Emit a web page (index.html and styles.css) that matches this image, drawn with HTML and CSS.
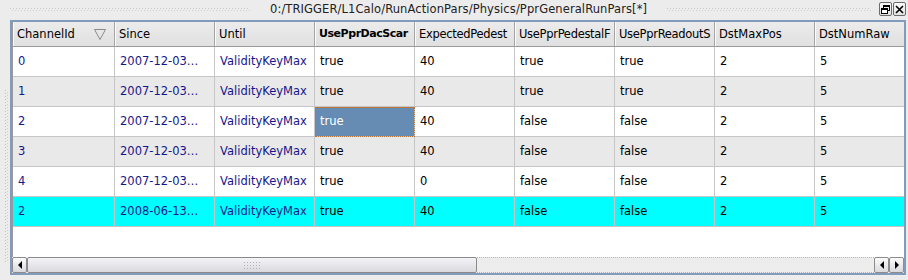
FILE: index.html
```html
<!DOCTYPE html>
<html lang="en">

<head>
    <meta charset="UTF-8">
    <title>PprGeneralRunPars</title>
    <link rel="stylesheet" href="styles.css">
</head>

<body>
    <div class="titlebar">
        <div class="grip grip-left"></div>
        <span class="title">0:/TRIGGER/L1Calo/RunActionPars/Physics/PprGeneralRunPars[*]</span>
        <div class="grip"></div>
        <div class="win-buttons">
            <span class="win-btn">
                <svg width="11" height="11" viewBox="0 0 11 11">
                    <rect x="3.5" y="1.5" width="6" height="5" fill="none" stroke="#000" stroke-width="1"/>
                    <rect x="3.5" y="1.5" width="6" height="1.5" fill="#000"/>
                    <rect x="1.5" y="4.5" width="6" height="5" fill="#fff" stroke="#000" stroke-width="1"/>
                    <rect x="1.5" y="4.5" width="6" height="1.5" fill="#000"/>
                </svg>
            </span>
            <span class="win-btn">
                <svg width="11" height="11" viewBox="0 0 11 11">
                    <path d="M2 2 L9 9 M9 2 L2 9" stroke="#000" stroke-width="1.6"/>
                </svg>
            </span>
        </div>
    </div>

    <div class="workspace">
        <div class="gutter">
            <div class="gutter-grip"></div>
        </div>
        <div class="frame">
            <div class="viewport">
                <div class="row head">
                    <div class="cell sorted">
                        <span>ChannelId</span>
                        <svg width="12" height="11" viewBox="0 0 12 11">
                            <polygon points="0.5,0.5 11.5,0.5 6,10.5" fill="none" stroke="#8a8a8a"/>
                        </svg>
                    </div>
                    <div class="cell">Since</div>
                    <div class="cell">Until</div>
                    <div class="cell bold">UsePprDacScar</div>
                    <div class="cell narrow">ExpectedPedest</div>
                    <div class="cell narrow">UsePprPedestalF</div>
                    <div class="cell narrow">UsePprReadoutS</div>
                    <div class="cell">DstMaxPos</div>
                    <div class="cell">DstNumRaw</div>
                </div>
                <div id="rows"></div>
                <div class="empty"></div>
            </div>
            <div class="hscroll">
                <span class="sb-btn"><i class="arrow-left"></i></span>
                <div class="thumb"><span class="thumb-grip"></span></div>
                <div class="track"></div>
                <span class="sb-btn"><i class="arrow-left"></i></span>
                <span class="sb-btn"><i class="arrow-right"></i></span>
            </div>
        </div>
    </div>

    <script>
        const data = [
            ['0', '2007-12-03…', 'ValidityKeyMax', 'true', '40', 'true', 'true', '2', '5'],
            ['1', '2007-12-03…', 'ValidityKeyMax', 'true', '40', 'true', 'true', '2', '5'],
            ['2', '2007-12-03…', 'ValidityKeyMax', 'true', '40', 'false', 'false', '2', '5'],
            ['3', '2007-12-03…', 'ValidityKeyMax', 'true', '40', 'false', 'false', '2', '5'],
            ['4', '2007-12-03…', 'ValidityKeyMax', 'true', '0', 'false', 'false', '2', '5'],
            ['2', '2008-06-13…', 'ValidityKeyMax', 'true', '40', 'false', 'false', '2', '5']
        ];

        const rows = document.getElementById('rows');

        data.forEach((values, r) => {
            const row = document.createElement('div');
            row.className = 'row';
            if (r % 2 === 1) row.classList.add('alt');
            if (r === data.length - 1) row.classList.add('hit');

            values.forEach((v, c) => {
                const cell = document.createElement('div');
                cell.className = 'cell';
                if (c < 3) cell.classList.add('key');
                if (r === 2 && c === 3) cell.classList.add('sel');
                cell.textContent = v;
                row.appendChild(cell);
            });

            rows.appendChild(row);
        });
    </script>
</body>
</html>
```

FILE: styles.css
```css
/* Global styles */
* {
    box-sizing: border-box;
    margin: 0;
    padding: 0;
}

body {
    width: 908px;
    height: 280px;
    overflow: hidden;
    background-color: #ececec;
    color: #000;
    font-family: "DejaVu Sans", sans-serif;
    font-size: 11.5px;
}

/* Title bar */
.titlebar {
    height: 20px;
    display: flex;
    align-items: center;
    padding: 0 2px 2px 10px;
}

.grip {
    flex: 1;
    height: 3px;
    background-image:
        linear-gradient(90deg, #c8c8c8 1px, transparent 1px),
        linear-gradient(90deg, transparent 2px, #d2d2d2 2px, #d2d2d2 3px, transparent 3px);
    background-size: 3px 1px, 3px 1px;
    background-position: 0 0, 0 2px;
    background-repeat: repeat-x;
}

.grip-left {
    flex: none;
    width: 240px;
}

.title {
    margin: 0 20px;
    color: #222;
    white-space: nowrap;
    letter-spacing: 0.1px;
}

.win-buttons {
    display: flex;
    gap: 1px;
    margin-left: 8px;
}

.win-btn {
    width: 13px;
    height: 14px;
    display: flex;
    align-items: center;
    justify-content: center;
    border: 1px solid #6c6c6c;
    border-radius: 2px;
    background: linear-gradient(#fbfbfb, #e2e2e2);
}

/* Main area */
.workspace {
    display: flex;
    height: 255px;
}

.gutter {
    width: 10px;
}

.gutter-grip {
    width: 3px;
    height: 172px;
    margin: 70px 0 0 5px;
    background-image:
        linear-gradient(#c2c2c2 1px, transparent 1px),
        linear-gradient(transparent 2px, #cfcfcf 2px, #cfcfcf 3px, transparent 3px);
    background-size: 1px 3px, 1px 3px;
    background-position: 0 0, 2px 0;
    background-repeat: repeat-y;
}

.frame {
    width: 896px;
    height: 255px;
    border: 2px solid #819cba;
    display: flex;
    flex-direction: column;
}

.viewport {
    flex: 1;
    background-color: #fff;
    border-left: 1px solid #9a9a9a;
    overflow: hidden;
}

/* Table rows */
.row {
    display: grid;
    grid-template-columns: 102px repeat(7, 100px) 1fr;
    height: 30px;
}

.cell {
    padding-left: 5px;
    line-height: 29px;
    white-space: nowrap;
    overflow: hidden;
    border-right: 1px solid #c6c6c6;
    border-bottom: 1px solid #c6c6c6;
}

.cell:last-child {
    border-right: none;
}

.head {
    height: 25px;
}

.head .cell {
    padding-left: 4px;
    line-height: 24px;
    background: linear-gradient(#ececec, #e0e0e0);
    border-right: 1px solid #a4a4a4;
    border-bottom: 1px solid #9a9a9a;
    box-shadow: inset 1px 0 #fbfbfb;
}

.head .cell:last-child {
    border-right: none;
}

.head .sorted {
    display: flex;
    justify-content: space-between;
    align-items: center;
    padding-right: 8px;
}

.head .bold {
    font-weight: bold;
    font-size: 11px;
    letter-spacing: -0.45px;
}

.head .narrow {
    letter-spacing: -0.3px;
}

.alt {
    background-color: #e9e9e9;
}

.hit {
    background-color: #00ffff;
}

.key {
    color: #16168a;
}

.sel {
    background-color: #678cb4;
    color: #fff;
    outline: 1px dotted #b8763c;
    outline-offset: -1px;
}

.empty {
    height: 30px;
}

/* Horizontal scrollbar */
.hscroll {
    height: 16px;
    display: flex;
    background-color: #f4f4f4;
}

.sb-btn {
    width: 15px;
    display: flex;
    align-items: center;
    justify-content: center;
    border: 1px solid #8c8c8c;
    border-radius: 2px;
    background: linear-gradient(#fbfbfb, #dadade);
}

.arrow-left {
    width: 0;
    height: 0;
    border-top: 4px solid transparent;
    border-bottom: 4px solid transparent;
    border-right: 4px solid #000;
}

.arrow-right {
    width: 0;
    height: 0;
    border-top: 4px solid transparent;
    border-bottom: 4px solid transparent;
    border-left: 4px solid #000;
}

.thumb {
    width: 450px;
    display: flex;
    align-items: center;
    justify-content: center;
    border: 1px solid #8a8a8a;
    border-radius: 2px;
    background: linear-gradient(#f4f4f8, #d9d9de);
}

.thumb-grip {
    width: 18px;
    height: 8px;
    background-image: radial-gradient(circle, #b4b4b8 0.8px, transparent 1px);
    background-size: 3px 3px;
}

.track {
    flex: 1;
    border-top: 1px dotted #b8b8b8;
    border-bottom: 1px dotted #b8b8b8;
    background-image: radial-gradient(circle, #e4e4e4 0.6px, transparent 0.8px);
    background-size: 2px 2px;
}
```
